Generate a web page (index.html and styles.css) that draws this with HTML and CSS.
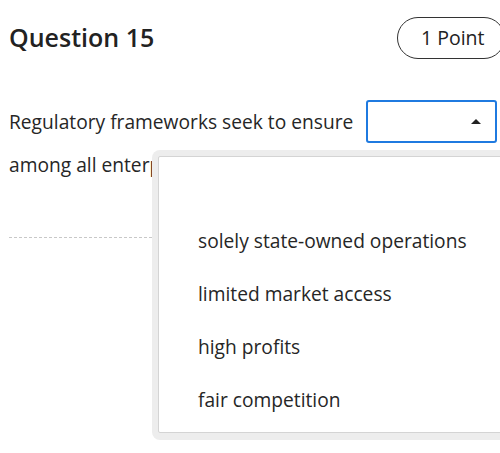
FILE: index.html
```html
<!DOCTYPE html>
<html>
<head>
<meta charset="utf-8">
<link rel="stylesheet" href="styles.css">
</head>
<body>
<div class="page">
  <div class="header">
    <h1 class="title">Question 15</h1>
    <div class="points">1 Point</div>
  </div>
  <div class="question">
    <p class="prompt">Regulatory frameworks seek to ensure <span class="select"><span class="arrow"></span></span><br>among all enterprises.</p>
  </div>
  <div class="divider"></div>
  <div class="popup">
    <ul class="options">
      <li class="option"></li>
      <li class="option">solely state-owned operations</li>
      <li class="option">limited market access</li>
      <li class="option">high profits</li>
      <li class="option">fair competition</li>
    </ul>
  </div>
</div>
</body>
</html>
```
FILE: styles.css
```css
html, body {
  margin: 0;
  padding: 0;
  overflow: hidden;
  background: #fff;
}
body {
  font-family: "Open Sans", "Noto Sans", sans-serif;
  color: #262626;
  width: 500px;
  height: 453px;
}
.page {
  position: relative;
  width: 520px;
  padding: 17px 0 0 9px;
  box-sizing: border-box;
}
.header {
  display: flex;
  justify-content: space-between;
  align-items: center;
  width: 496px;
}
.title {
  margin: 0;
  font-size: 25px;
  font-weight: 600;
  line-height: 41px;
  color: #222;
  margin-top: -2px;
}
.points {
  box-sizing: border-box;
  height: 42px;
  width: 108px;
  border: 1px solid #333;
  border-radius: 21px;
  font-size: 19.5px;
  line-height: 40px;
  padding-left: 23px;
  color: #222;
}
.question {
  margin-top: 41px;
}
.prompt {
  margin: 0;
  font-size: 19.2px;
  line-height: 43px;
}
.select {
  display: inline-block;
  vertical-align: middle;
  box-sizing: border-box;
  width: 131px;
  height: 43px;
  border: 2px solid #1f7ae0;
  border-radius: 3px;
  position: relative;
  margin-left: 8px;
  margin-top: -4px;
}
.arrow {
  position: absolute;
  right: 14px;
  top: 17px;
  width: 0;
  height: 0;
  border-left: 5px solid transparent;
  border-right: 5px solid transparent;
  border-bottom: 5px solid #222;
}
.divider {
  margin-top: 51px;
  width: 148px;
  border-top: 1px dashed #c8c8c8;
}
.popup {
  position: absolute;
  left: 152px;
  top: 150px;
  width: 370px;
  height: 290px;
  box-sizing: border-box;
  background: #ededed;
  border-radius: 8px;
  padding: 6px 0 7px 6px;
}
.options {
  margin: 0;
  padding: 0 0 0 39px;
  list-style: none;
  height: 100%;
  box-sizing: border-box;
  background: #fff;
  border: 1px solid #d4d4d4;
  border-radius: 2px;
}
.option {
  font-size: 19.2px;
  height: 53px;
  line-height: 53px;
  color: #262626;
}
.option:first-child {
  height: 57px;
}
```
